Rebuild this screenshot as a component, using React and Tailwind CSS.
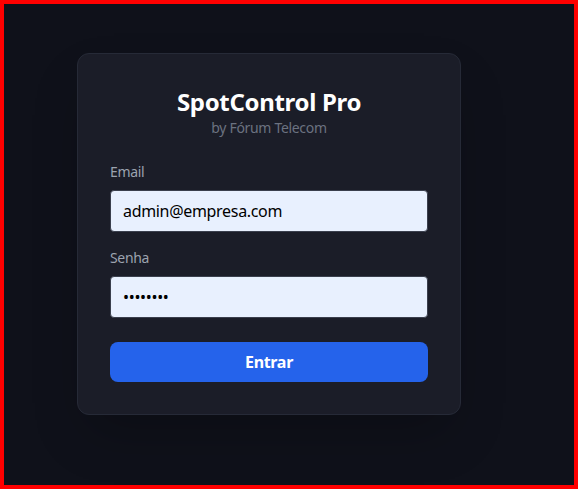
export default function App() {
  return (
    <div className="w-full h-[489px] border-4 border-[#ff0000] bg-[#0f111a] pl-[73px] pt-[49px] font-['Noto_Sans','Open_Sans',sans-serif] tracking-[-0.02em]">
      <div className="w-[384px] rounded-xl border border-[#262a37] bg-[#1b1d28] p-8 shadow-2xl">
        <div className="mb-6 text-center">
          <h1 className="text-2xl font-bold text-white">SpotControl Pro</h1>
          <p className="text-sm text-[#6b7280]">by Fórum Telecom</p>
        </div>
        <form className="flex flex-col gap-4">
          <div>
            <label className="mb-2 block text-sm text-[#9ca3af]">Email</label>
            <input
              type="email"
              defaultValue="admin@empresa.com"
              className="w-full rounded border border-[#3a3f4d] bg-[#e8f0fe] px-3 py-2 text-base tracking-[-0.02em] text-black outline-none"
            />
          </div>
          <div>
            <label className="mb-2 block text-sm text-[#9ca3af]">Senha</label>
            <input
              type="password"
              defaultValue="12345678"
              className="w-full rounded border border-[#3a3f4d] bg-[#e8f0fe] px-3 py-2 text-base text-black outline-none"
            />
          </div>
          <button
            type="button"
            className="mt-2 w-full rounded-lg bg-[#2563eb] py-2 text-base font-bold text-white"
          >
            Entrar
          </button>
        </form>
      </div>
    </div>
  );
}
